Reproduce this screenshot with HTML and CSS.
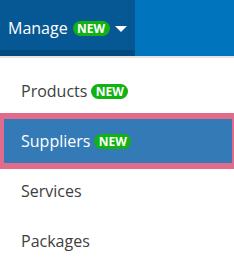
FILE: index.html
```html
<!DOCTYPE html>
<html>
<head>
<meta charset="utf-8">
<link rel="stylesheet" href="styles.css">
</head>
<body>
<div class="page">
  <header class="topbar">
    <div class="tab">
      <span class="tab-label">Manage</span>
      <span class="badge">NEW</span>
      <span class="caret"></span>
    </div>
    <div class="bar-rest"></div>
  </header>
  <div class="divider"></div>
  <ul class="menu">
    <li class="item"><a class="link">Products <span class="badge">NEW</span></a></li>
    <li class="item"><a class="link active">Suppliers <span class="badge">NEW</span></a></li>
    <li class="item"><a class="link">Services</a></li>
    <li class="item"><a class="link">Packages</a></li>
  </ul>
</div>
</body>
</html>
```
FILE: styles.css
```css
html, body {
  margin: 0;
  padding: 0;
  background: #ffffff;
}
body {
  font-family: "Open Sans", "Noto Sans", sans-serif;
  width: 234px;
  height: 257px;
  overflow: hidden;
}
.page {
  width: 234px;
}
.topbar {
  display: flex;
  height: 56px;
}
.tab {
  width: 135px;
  box-sizing: border-box;
  background: #065894;
  border-bottom: 6px solid #004a7e;
  display: flex;
  align-items: center;
  padding-left: 8px;
  padding-top: 6px;
}
.tab-label {
  color: #ffffff;
  font-size: 16px;
}
.bar-rest {
  flex: 1;
  background: #0074bd;
}
.badge {
  display: inline-flex;
  align-items: center;
  justify-content: center;
  width: 37px;
  height: 15px;
  border-radius: 8px;
  background: #12b212;
  color: #ffffff;
  font-size: 12px;
  font-weight: 700;
  line-height: 15px;
  margin-left: 5px;
  vertical-align: 1px;
}
.caret {
  width: 0;
  height: 0;
  border-left: 6px solid transparent;
  border-right: 6px solid transparent;
  border-top: 6px solid #ffffff;
  margin-left: 5px;
  margin-top: 1px;
}
.divider {
  height: 2px;
  background: #e4e4e4;
}
.menu {
  list-style: none;
  margin: 0;
  padding: 8px 0 0 0;
}
.item {
  height: 50px;
  display: flex;
}
.link {
  flex: 1;
  display: flex;
  align-items: center;
  padding-left: 21px;
  color: #404040;
  font-size: 16px;
}
.link .badge {
  margin-left: 4px;
}
.link.active {
  margin: 3px 2px 3px 4px;
  padding-left: 17px;
  background: #337ab7;
  color: #ffffff;
  outline: 6px solid #e06b8b;
}
```
